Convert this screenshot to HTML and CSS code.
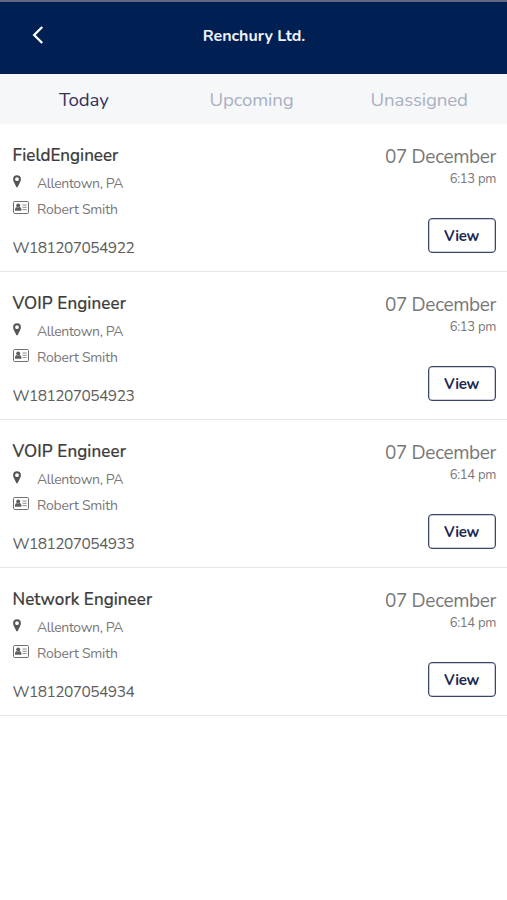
FILE: index.html
```html
<!DOCTYPE html>
<html lang="en">
<head>
<meta charset="utf-8">
<title>Renchury Ltd.</title>
<link rel="stylesheet" href="styles.css">
</head>
<body>
<svg class="sprite" aria-hidden="true">
  <symbol id="pin" viewBox="0 0 8 13"><path fill-rule="evenodd" d="M4 0.3A3.9 3.9 0 0 0 .1 4.2C.1 5.4.6 6.3 1.1 7.4L3.3 12.1Q4 13 4.7 12.1L6.9 7.4C7.4 6.3 7.9 5.4 7.9 4.2A3.9 3.9 0 0 0 4 .3ZM4 2.3A1.9 1.9 0 1 1 4 6.1A1.9 1.9 0 0 1 4 2.3Z"/></symbol>
  <symbol id="card" viewBox="0 0 16 13"><rect x=".5" y=".5" width="15" height="12" rx="1.2" fill="none" stroke="currentColor" stroke-width=".9"/><circle cx="5.2" cy="4.5" r="2"/><path d="M2 9.8V8.3Q2 6.2 4 5.9L5.2 6.7L6.4 5.9Q8.4 6.2 8.4 8.3V9.8Z"/><path d="M9.5 4H13.7M9.5 6.3H13.7M9.5 8.6H13.7" stroke="currentColor" opacity=".7"/></symbol>
</svg>
<header class="header">
  <svg class="back" viewBox="0 0 12 20"><path d="M10.2 2L2.2 10L10.2 18"/></svg>
  <h1 class="company">Renchury Ltd.</h1>
</header>
<nav class="tabs">
  <span class="tab active">Today</span>
  <span class="tab">Upcoming</span>
  <span class="tab">Unassigned</span>
</nav>
<main>
  <article class="job">
    <div class="info">
      <h2 class="title">FieldEngineer</h2>
      <div class="meta place"><svg class="pin"><use href="#pin"/></svg><span class="city">Allentown, PA</span></div>
      <div class="meta person"><svg class="card"><use href="#card"/></svg><span class="name">Robert Smith</span></div>
      <div class="code">W181207054922</div>
    </div>
    <div class="side"><div class="date">07 December</div><div class="time">6:13 pm</div><button class="view">View</button></div>
  </article>
  <article class="job">
    <div class="info">
      <h2 class="title voip">VOIP Engineer</h2>
      <div class="meta place"><svg class="pin"><use href="#pin"/></svg><span class="city">Allentown, PA</span></div>
      <div class="meta person"><svg class="card"><use href="#card"/></svg><span class="name">Robert Smith</span></div>
      <div class="code">W181207054923</div>
    </div>
    <div class="side"><div class="date">07 December</div><div class="time">6:13 pm</div><button class="view">View</button></div>
  </article>
  <article class="job">
    <div class="info">
      <h2 class="title voip">VOIP Engineer</h2>
      <div class="meta place"><svg class="pin"><use href="#pin"/></svg><span class="city">Allentown, PA</span></div>
      <div class="meta person"><svg class="card"><use href="#card"/></svg><span class="name">Robert Smith</span></div>
      <div class="code">W181207054933</div>
    </div>
    <div class="side"><div class="date">07 December</div><div class="time">6:14 pm</div><button class="view">View</button></div>
  </article>
  <article class="job">
    <div class="info">
      <h2 class="title network">Network Engineer</h2>
      <div class="meta place"><svg class="pin"><use href="#pin"/></svg><span class="city">Allentown, PA</span></div>
      <div class="meta person"><svg class="card"><use href="#card"/></svg><span class="name">Robert Smith</span></div>
      <div class="code">W181207054934</div>
    </div>
    <div class="side"><div class="date">07 December</div><div class="time">6:14 pm</div><button class="view">View</button></div>
  </article>
</main>
</body>
</html>
```
FILE: styles.css
```css
* { box-sizing: border-box; }
body { margin: 0; background: #fff; font-family: Nunito, Lato, sans-serif; color: #444; }
h1, h2 { margin: 0; }
.sprite { display: none; }

.header { display: grid; grid-template-columns: 60px 1fr 60px; align-items: center; height: 74px; padding: 0 0 4px; background: #002054; border-top: 2px solid #62697f; }
.back { width: 12px; height: 20px; margin: -2px 0 0 32px; fill: none; stroke: #fff; stroke-width: 2.3; }
.company { padding-left: 1px; text-align: center; font-size: 16px; line-height: 20px; font-weight: 700; color: #f0f3fb; }

.tabs { display: grid; grid-template-columns: repeat(3, 1fr); height: 50px; padding-right: 4px; background: #f6f7f8; line-height: 53px; font-size: 18.7px; text-align: center; color: #a9b0c3; }
.tab { letter-spacing: -.15px; }
.tab.active { color: #35305c; }

.job { display: flex; justify-content: space-between; height: 148px; padding: 21px 11px 0 12.5px; border-bottom: 1px solid #e6e6e6; }
.title { font-size: 17px; line-height: 22px; font-weight: 500; color: #3c3c3c; -webkit-text-stroke: .2px #3c3c3c; white-space: nowrap; }
.voip { letter-spacing: .1px; }
.network { letter-spacing: .06px; }
.meta { display: flex; align-items: center; height: 20px; font-size: 14px; color: #777; }
.meta svg { flex: none; fill: currentColor; }
.city { letter-spacing: -.38px; }
.name { letter-spacing: -.22px; }
.place { margin-top: 6px; }
.person { margin-top: 6px; }
.pin { width: 8px; height: 13px; margin: 0 16.5px 4px 0; color: #555; }
.card { width: 16px; height: 13px; margin: 0 8.5px 4px 0; color: #606060; }
.code { margin-top: 18px; font-size: 15.5px; line-height: 22px; letter-spacing: -.54px; color: #5d5d5d; }

.side { display: flex; flex-direction: column; align-items: flex-end; }
.date { font-size: 19px; line-height: 24px; letter-spacing: -.35px; color: #777; }
.time { margin-top: 1px; font-size: 13px; line-height: 18px; letter-spacing: -.3px; color: #777; }
.view { width: 68px; height: 35px; margin-top: 30px; padding: 0 1px 0 0; border: 1px solid #394669; box-shadow: inset 0 0 0 .5px #39466980; border-radius: 4px; background: #fff; color: #1e2851; font: 700 15px/20px Nunito, Lato, sans-serif; letter-spacing: -.3px; }
```
